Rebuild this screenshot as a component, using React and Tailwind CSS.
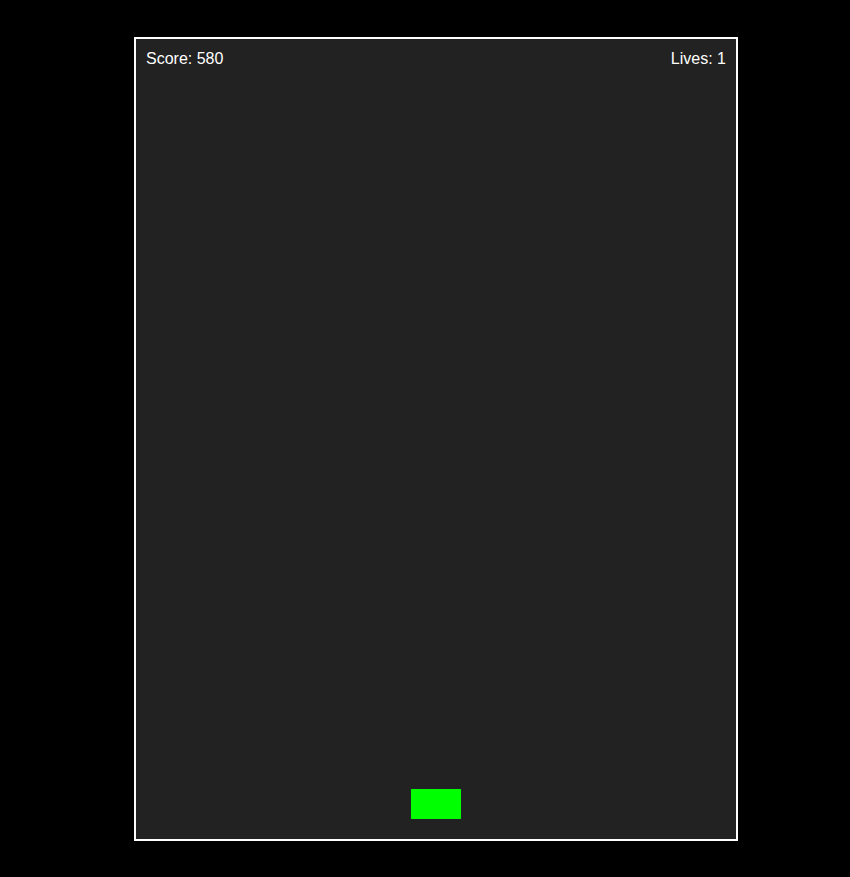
import React from 'react';

const paddle = { x: 275, y: 750, w: 50, h: 30 };

export default function App() {
  return (
    <div className="flex h-[877px] w-full items-center bg-black pl-[134px] font-['Liberation_Sans',Arial,sans-serif]">
      <div className="relative h-[804px] w-[604px] border-2 border-white bg-[#222222]">
        <div className="flex justify-between px-[10px] pt-[11px] text-[16px] leading-[18px] text-white">
          <span>Score: 580</span>
          <span>Lives: 1</span>
        </div>
        <div
          className="absolute bg-[#00ff00]"
          style={{ left: paddle.x, top: paddle.y, width: paddle.w, height: paddle.h }}
        />
      </div>
    </div>
  );
}
